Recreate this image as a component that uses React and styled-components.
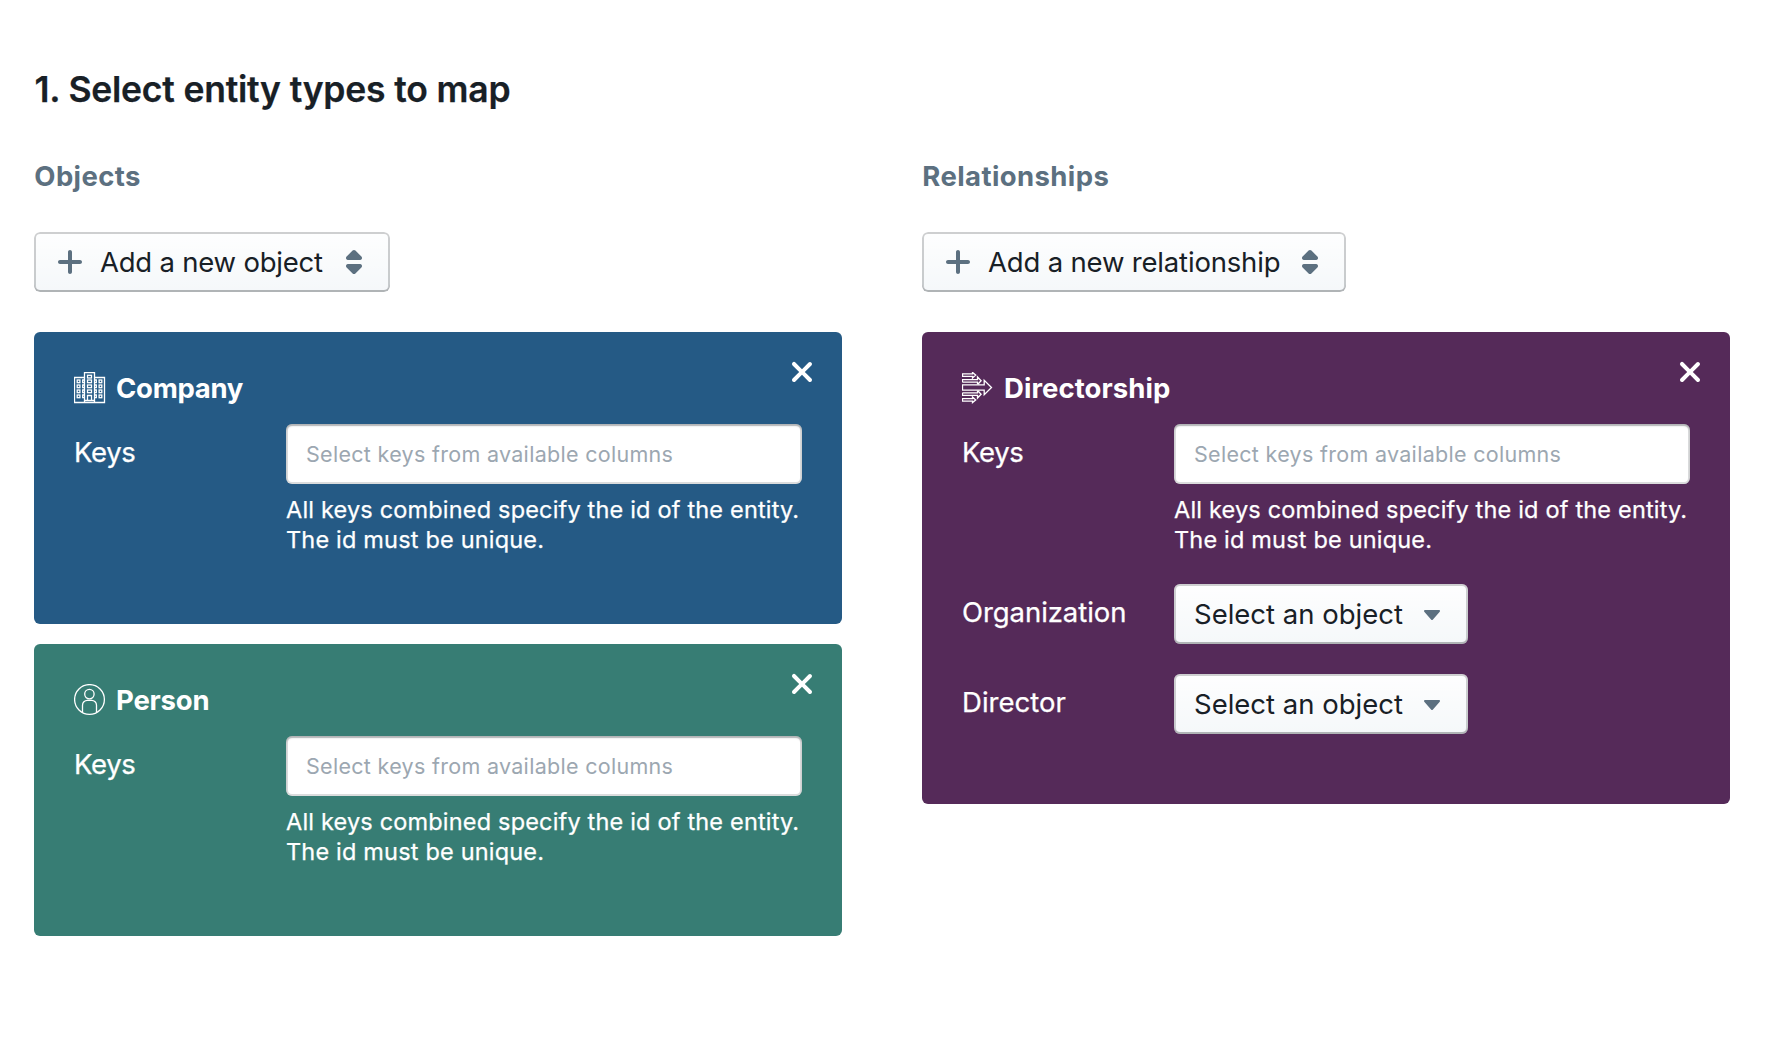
import React from "react";
import styled, { createGlobalStyle } from "styled-components";

const GlobalStyle = createGlobalStyle`
  *, *::before, *::after { box-sizing: border-box; }
  body {
    margin: 0;
    background: #ffffff;
    color: #182026;
    font-family: Inter, "Liberation Sans", sans-serif;
    -webkit-font-smoothing: antialiased;
  }
`;

const Page = styled.main`
  min-height: 1054px;
  padding: 69px 38px 0 34px;
`;

const Title = styled.h1`
  margin: 0 0 48px;
  font-size: 35.5px;
  font-weight: 600;
  line-height: 42px;
  letter-spacing: -0.27px;
  word-spacing: 0.4px;
  text-indent: 0.4px;
  -webkit-text-stroke: 0.25px currentColor;
`;

const Columns = styled.div`
  display: grid;
  grid-template-columns: 808px 808px;
  column-gap: 80px;
  align-items: start;
`;

const Column = styled.section`
  display: flex;
  flex-direction: column;
  align-items: flex-start;
`;

const ColumnTitle = styled.h2`
  margin: 0 0 39px;
  color: #5c7080;
  font-size: 27.5px;
  font-weight: 700;
  line-height: 34px;
  letter-spacing: 0.4px;
  text-indent: 0.3px;
`;

const Button = styled.button`
  display: flex;
  align-items: center;
  width: ${(p) => p.$width}px;
  height: 60px;
  padding: 0 20px;
  border: 0;
  border-radius: 6px;
  background: #f5f8fa linear-gradient(to bottom, rgba(255, 255, 255, 0.9), rgba(255, 255, 255, 0));
  box-shadow: inset 0 0 0 2px rgba(16, 22, 26, 0.2), inset 0 -2px 0 rgba(16, 22, 26, 0.12);
  color: #182026;
  font-family: inherit;
  font-size: 27.5px;
  line-height: 34px;
  letter-spacing: ${(p) => p.$tracking || 0}px;
  white-space: nowrap;
`;

const ButtonText = styled.span`
  flex: 1;
  text-align: left;
`;

const Glyph = styled.svg`
  flex: none;
  display: block;
  width: 32px;
  height: 32px;
  fill: ${(p) => p.$color || "#5c7080"};
  margin-right: ${(p) => p.$gap || 0}px;
`;

const CardList = styled.div`
  display: flex;
  flex-direction: column;
  gap: 20px;
  width: 100%;
  margin-top: 40px;
`;

const Card = styled.article`
  position: relative;
  padding: 40px 40px 40px;
  border-radius: 6px;
  background: ${(p) => p.$color};
  color: #ffffff;
`;

const CardHeader = styled.header`
  display: flex;
  align-items: center;
  gap: 10px;
  height: 32px;
  margin-bottom: 20px;
`;

const CardTitle = styled.h3`
  margin: 0;
  font-size: 27.5px;
  font-weight: 700;
  line-height: 32px;
  letter-spacing: ${(p) => p.$tracking}px;
`;

const CloseButton = styled.button`
  position: absolute;
  top: 10px;
  right: 10px;
  display: flex;
  align-items: center;
  justify-content: center;
  width: 60px;
  height: 60px;
  padding: 0;
  border: 0;
  background: none;
`;

const Field = styled.div`
  display: flex;
  align-items: flex-start;
  margin-bottom: 30px;
`;

const Label = styled.label`
  flex: none;
  width: 212px;
  font-size: 27.5px;
  line-height: 56px;
  letter-spacing: ${(p) => p.$tracking || 0}px;
  -webkit-text-stroke: 0.25px currentColor;
`;

const FieldBody = styled.div`
  flex: 1;
  min-width: 0;
`;

const KeysInput = styled.input`
  display: block;
  width: 100%;
  height: 60px;
  padding: 0 20px;
  border: 0;
  border-radius: 6px;
  outline: 0;
  background: #ffffff;
  box-shadow: inset 0 0 0 2px rgba(16, 22, 26, 0.15), inset 0 2px 2px rgba(16, 22, 26, 0.2);
  color: #182026;
  font-family: inherit;
  font-size: 21.5px;
  letter-spacing: 0.3px;

  &::placeholder {
    color: #9ca7b1;
    opacity: 1;
  }
`;

const Help = styled.p`
  margin: 11px 0 -1px;
  font-size: 23.5px;
  line-height: 30px;
  letter-spacing: 0.18px;
  white-space: nowrap;
  -webkit-text-stroke: 0.25px currentColor;
`;

const EntityIcon = styled.svg`
  flex: none;
  width: 32px;
  height: 32px;
  fill: none;
  stroke: #ffffff;
  stroke-width: 1.3;
`;

const PlusIcon = () => (
  <Glyph viewBox="0 0 16 16" $gap={14}>
    <path d="M13 7H9V3c0-.55-.45-1-1-1s-1 .45-1 1v4H3c-.55 0-1 .45-1 1s.45 1 1 1h4v4c0 .55.45 1 1 1s1-.45 1-1V9h4c.55 0 1-.45 1-1s-.45-1-1-1z" />
  </Glyph>
);

const DoubleCaretIcon = () => (
  <Glyph viewBox="0 0 16 16">
    <path d="M5 7h6a1.003 1.003 0 00.71-1.71l-3-3C8.53 2.11 8.28 2 8 2s-.53.11-.71.29l-3 3A1.003 1.003 0 005 7zm6 2H5a1.003 1.003 0 00-.71 1.71l3 3c.18.18.43.29.71.29s.53-.11.71-.29l3-3A1.003 1.003 0 0011 9z" />
  </Glyph>
);

const CaretDownIcon = () => (
  <Glyph viewBox="0 0 16 16">
    <path d="M12 6.5c0-.28-.22-.5-.5-.5h-7a.495.495 0 00-.37.83l3.5 4c.09.1.22.17.37.17s.28-.07.37-.17l3.5-4c.08-.09.13-.2.13-.33z" />
  </Glyph>
);

const CrossIcon = () => (
  <Glyph viewBox="0 0 16 16" $color="#ffffff">
    <path d="M9.41 8l3.29-3.29c.19-.18.3-.43.3-.71a1.003 1.003 0 00-1.71-.71L8 6.59l-3.29-3.3a1.003 1.003 0 00-1.42 1.42L6.59 8 3.3 11.29c-.19.18-.3.43-.3.71a1.003 1.003 0 001.71.71L8 9.41l3.29 3.29c.18.19.43.3.71.3a1.003 1.003 0 00.71-1.71L9.41 8z" />
  </Glyph>
);

const floors = [8, 13, 18, 23];

const BuildingIcon = () => (
  <EntityIcon viewBox="0 0 32 32">
    <path d="M10.5 5.5h-10v25h30v-25h-10" />
    <path d="M10.5 30.5v-30h10v30M10.5 28.5h10" />
    <rect x="13.5" y="3.3" width="4" height="2.7" />
    {floors.map((y) => (
      <g key={y}>
        <rect x="3.2" y={y} width="2.7" height="2.7" />
        <path d={`M10.5 ${y}h-1.8v2.7h1.8M20.5 ${y}h1.8v2.7h-1.8`} />
        <rect x="25.1" y={y} width="2.7" height="2.7" />
        {y < 23 && <rect x="13.5" y={y} width="4" height="2.7" />}
      </g>
    ))}
    <path d="M13.5 28v-4.5h4V28" />
  </EntityIcon>
);

const PersonIcon = () => (
  <EntityIcon viewBox="0 0 32 32">
    <circle cx="15.5" cy="15.5" r="14.9" />
    <circle cx="15.4" cy="10.1" r="4.7" />
    <path d="M8.5 28.6V21.2a4.8 4.8 0 0 1 4.8-4.8h4.4a4.8 4.8 0 0 1 4.8 4.8v7.4" />
  </EntityIcon>
);

const ArrowsIcon = () => (
  <EntityIcon viewBox="0 0 32 32">
    <path d="M.5 12.8h21.7V8.3l7.3 7.2-7.3 7.2v-4.5H.5z" />
    <path d="M.5 10.2V7.6h15V5l3.6 3.8-2.4 2.4v1.4M15.5 12.6v-2.4H.5" />
    <path d="M.5 20.8v2.6h15V26l3.6-3.8-2.4-2.4v-1.4M15.5 18.4v2.4H.5" />
    <path d="M.5 4.4V1.8h10V.4l3.2 2.7-3.2 2.9V4.4z" />
    <path d="M.5 26.6v2.6h10v1.4l3.2-2.7-3.2-2.9v1.6z" />
  </EntityIcon>
);

function EntityCard({ name, color, icon, tracking, children }) {
  return (
    <Card $color={color}>
      <CardHeader>
        {icon}
        <CardTitle $tracking={tracking}>{name}</CardTitle>
      </CardHeader>
      <CloseButton type="button" aria-label="Remove">
        <CrossIcon />
      </CloseButton>
      <Field>
        <Label $tracking={-0.35}>Keys</Label>
        <FieldBody>
          <KeysInput placeholder="Select keys from available columns" />
          <Help>
            All keys combined specify the id of the entity.
            <br />
            The id must be unique.
          </Help>
        </FieldBody>
      </Field>
      {children}
    </Card>
  );
}

function ObjectField({ label, tracking }) {
  return (
    <Field>
      <Label $tracking={tracking}>{label}</Label>
      <Button type="button" $width={294}>
        <ButtonText>Select an object</ButtonText>
        <CaretDownIcon />
      </Button>
    </Field>
  );
}

export default function App() {
  return (
    <Page>
      <GlobalStyle />
      <Title>1. Select entity types to map</Title>
      <Columns>
        <Column>
          <ColumnTitle>Objects</ColumnTitle>
          <Button type="button" $width={356} $tracking={-0.22}>
            <PlusIcon />
            <ButtonText>Add a new object</ButtonText>
            <DoubleCaretIcon />
          </Button>
          <CardList>
            <EntityCard name="Company" color="#255a85" icon={<BuildingIcon />} tracking={-0.28} />
            <EntityCard name="Person" color="#377d74" icon={<PersonIcon />} tracking={-0.2} />
          </CardList>
        </Column>
        <Column>
          <ColumnTitle>Relationships</ColumnTitle>
          <Button type="button" $width={424} $tracking={-0.18}>
            <PlusIcon />
            <ButtonText>Add a new relationship</ButtonText>
            <DoubleCaretIcon />
          </Button>
          <CardList>
            <EntityCard name="Directorship" color="#552a59" icon={<ArrowsIcon />} tracking={0.06}>
              <ObjectField label="Organization" tracking={-0.07} />
              <ObjectField label="Director" tracking={0.03} />
            </EntityCard>
          </CardList>
        </Column>
      </Columns>
    </Page>
  );
}
